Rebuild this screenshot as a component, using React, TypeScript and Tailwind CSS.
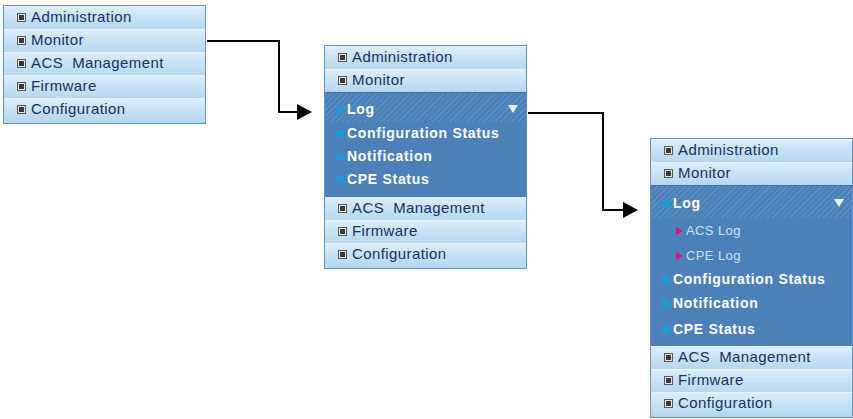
import React from 'react';

type Mode = 'closed' | 'log' | 'logOpen';

const font = { fontFamily: '"Liberation Sans", Arial, sans-serif' };

function SquareIcon() {
  return (
    <span className="flex items-center justify-center w-[9px] h-[9px] border border-[#5a5a5a] bg-[#e4e4e4] shrink-0">
      <span className="w-[5px] h-[5px] bg-[#3a3a3a]" />
    </span>
  );
}

function LightRow({ label }: { label: string }) {
  return (
    <div className="h-[23px] flex items-center gap-[5px] pl-[13px] pb-[2px] bg-gradient-to-b from-[#dcedf9] via-[#c6e2f4] to-[#b6d8ef] border-t border-[#e9f4fb] text-[#1a3160] text-[15px] tracking-[0.4px] whitespace-pre">
      <SquareIcon />
      <span>{label}</span>
    </div>
  );
}

function DarkItem({ label, h = 'h-[23px]' }: { label: string; h?: string }) {
  return (
    <div className={`${h} flex items-center gap-[3px] pl-[11px] text-white font-bold text-[14px] tracking-[0.7px]`}>
      <span className="w-[8px] h-[7px] bg-[#1f9ad2] shrink-0" />
      <span>{label}</span>
    </div>
  );
}

function SubItem({ label }: { label: string }) {
  return (
    <div className="h-[25px] flex items-center gap-[3px] pl-[25px] text-[#cfe0f2] text-[13px] tracking-[0.4px]">
      <span className="w-0 h-0 border-y-[4px] border-y-transparent border-l-[7px] border-l-[#e0157a]" />
      <span>{label}</span>
    </div>
  );
}

function Panel({ mode, className }: { mode: Mode; className: string }) {
  const top = mode === 'closed' ? ['Administration', 'Monitor', 'ACS  Management', 'Firmware', 'Configuration'] : ['Administration', 'Monitor'];
  const open = mode === 'logOpen';
  return (
    <div className={`absolute w-[203px] border border-[#5f93c9] bg-[#b6d8ef] ${className}`} style={font}>
      {top.map((t) => (
        <LightRow key={t} label={t} />
      ))}
      {mode !== 'closed' && (
        <>
          <div className={`bg-[#4c80b9] border-t border-[#3d6fa6] ${open ? 'pb-[4px]' : 'pb-[6px]'}`}>
            <div
              className={`flex items-center justify-between pr-[8px] bg-[repeating-linear-gradient(135deg,#5b8fc5_0px,#5b8fc5_1px,#4c80b9_1px,#4c80b9_4px)] ${
                open ? 'h-[32px] pt-[2px]' : 'h-[29px] pt-[3px]'
              }`}
            >
              <div className="flex items-center gap-[3px] pl-[11px] text-white font-bold text-[14px] tracking-[0.7px]">
                <span className="w-[8px] h-[7px] bg-[#1f9ad2]" />
                <span>Log</span>
              </div>
              <span className="w-0 h-0 border-x-[5px] border-x-transparent border-t-[8px] border-t-[#eaf4fc]" />
            </div>
            {open && (
              <>
                <SubItem label="ACS Log" />
                <SubItem label="CPE Log" />
              </>
            )}
            <DarkItem label="Configuration Status" />
            <DarkItem label="Notification" h={open ? 'h-[25px]' : 'h-[23px]'} />
            <DarkItem label="CPE Status" h={open ? 'h-[26px]' : 'h-[23px]'} />
          </div>
          {['ACS  Management', 'Firmware', 'Configuration'].map((t) => (
            <LightRow key={t} label={t} />
          ))}
        </>
      )}
      <div className="h-[2px]" />
    </div>
  );
}

export default function App() {
  return (
    <div className="relative w-[853px] h-[419px] bg-white overflow-hidden">
      <Panel mode="closed" className="left-[3px] top-[5px]" />
      <Panel mode="log" className="left-[324px] top-[45px]" />
      <Panel mode="logOpen" className="left-[650px] top-[138px]" />

      <svg className="absolute inset-0" width="853" height="419" viewBox="0 0 853 419">
        <polyline points="207,41 279,41 279,112 299,112" fill="none" stroke="#000" strokeWidth="2" />
        <polygon points="297,104 312,112 297,120" fill="#000" />
        <polyline points="528,113 603,113 603,210 625,210" fill="none" stroke="#000" strokeWidth="2" />
        <polygon points="623,202 638,210 623,218" fill="#000" />
      </svg>
    </div>
  );
}
